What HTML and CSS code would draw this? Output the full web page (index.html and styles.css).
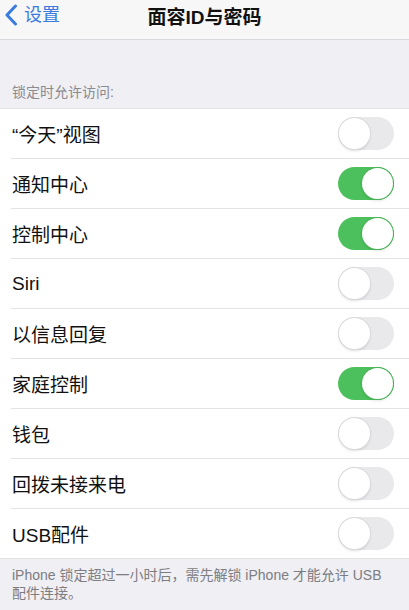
FILE: index.html
```html
<!DOCTYPE html>
<html lang="zh">
<head>
    <meta charset="UTF-8">
    <meta name="viewport" content="width=device-width, initial-scale=1.0">
    <title>面容ID与密码</title>
    <link rel="stylesheet" href="styles.css">
</head>
<body>
    <div class="navbar">
        <div class="back">
            <svg class="chevron" width="14" height="22" viewBox="0 0 14 22">
                <path d="M11.5 2 L3 11 L11.5 20" fill="none" stroke="#3a7be0" stroke-width="3" stroke-linecap="round" stroke-linejoin="round"/>
            </svg>
            <span>设置</span>
        </div>
        <div class="title">面容ID与密码</div>
    </div>

    <div class="section-header">锁定时允许访问:</div>

    <ul class="list">
        <li class="row"><span>“今天”视图</span><span class="switch"></span></li>
        <li class="row"><span>通知中心</span><span class="switch on"></span></li>
        <li class="row"><span>控制中心</span><span class="switch on"></span></li>
        <li class="row"><span>Siri</span><span class="switch"></span></li>
        <li class="row"><span>以信息回复</span><span class="switch"></span></li>
        <li class="row"><span>家庭控制</span><span class="switch on"></span></li>
        <li class="row"><span>钱包</span><span class="switch"></span></li>
        <li class="row"><span>回拨未接来电</span><span class="switch"></span></li>
        <li class="row"><span>USB配件</span><span class="switch"></span></li>
    </ul>

    <div class="footer">iPhone 锁定超过一小时后，需先解锁 iPhone 才能允许 USB 配件连接。</div>
</body>
</html>
```

FILE: styles.css
```css
body {
    margin: 0;
    background-color: #efeff4;
    font-family: "Liberation Sans", "Noto Sans CJK SC", sans-serif;
    color: #111;
}
.navbar {
    position: relative;
    height: 39px;
    background-color: #f7f7f7;
    border-bottom: 1px solid #d8d8dc;
    display: flex;
    align-items: center;
    justify-content: center;
}
.back {
    position: absolute;
    left: 4px;
    top: 4px;
    display: flex;
    align-items: center;
    gap: 6px;
    color: #3a7be0;
    font-size: 18px;
    line-height: 22px;
}
.chevron {
    display: block;
}
.title {
    font-size: 19px;
    font-weight: bold;
    margin-top: -8px;
}
.section-header {
    padding: 43px 12px 0;
    height: 25px;
    font-size: 14px;
    line-height: 18px;
    color: #8a8a8f;
}
.list {
    list-style: none;
    margin: 0;
    padding: 0;
    background-color: white;
    border-top: 1px solid #e3e3e6;
    border-bottom: 1px solid #e3e3e6;
}
.row {
    height: 49px;
    margin-left: 11px;
    padding-left: 1px;
    padding-right: 15px;
    display: flex;
    align-items: center;
    justify-content: space-between;
    border-bottom: 1px solid #e3e3e6;
    font-size: 19px;
}
.row:last-child {
    border-bottom: none;
}
.switch {
    position: relative;
    width: 56px;
    height: 33px;
    border-radius: 17px;
    background-color: #e9e9eb;
}
.switch::after {
    content: "";
    position: absolute;
    top: 1px;
    left: 1px;
    width: 31px;
    height: 31px;
    border-radius: 50%;
    background-color: white;
    box-shadow: 0 0 0 1px #d9d9dc, 0 2px 3px rgba(0,0,0,0.12);
}
.switch.on {
    background-color: #4cc05c;
}
.switch.on::after {
    left: 24px;
    box-shadow: 0 0 0 1px #49b257, 0 2px 3px rgba(0,0,0,0.1);
}
.footer {
    padding: 7px 12px 0;
    font-size: 14px;
    line-height: 18px;
    color: #7d7d82;
}
```
